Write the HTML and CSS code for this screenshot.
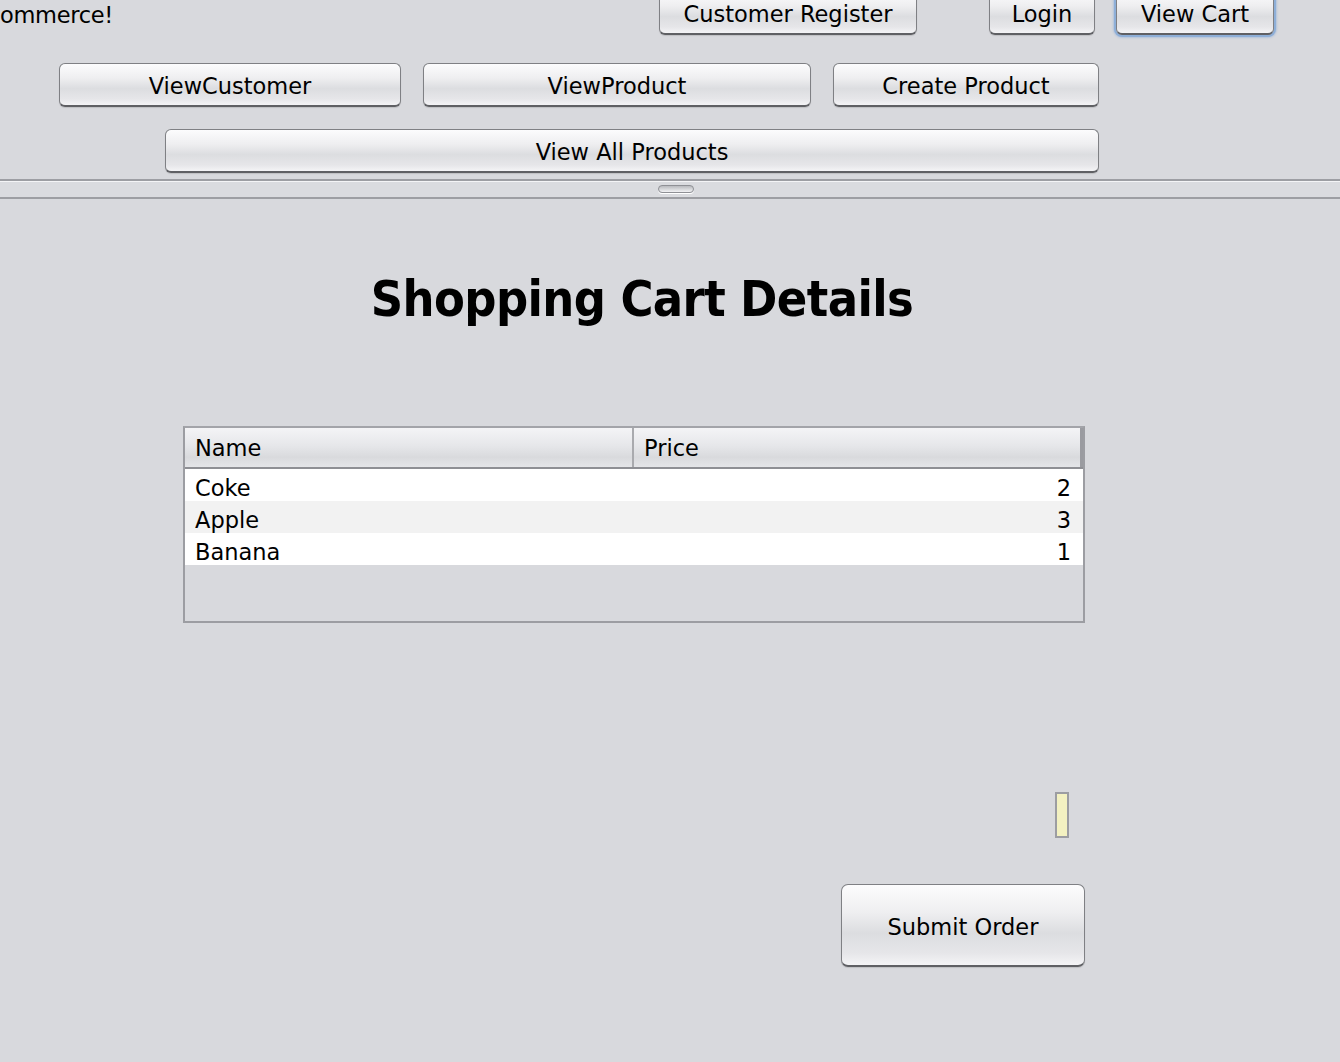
FILE: index.html
```html
<!DOCTYPE html>
<html>
<head>
<meta charset="utf-8">
<title>Shopping Cart</title>
<link rel="stylesheet" href="styles.css">
</head>
<body>
<div class="window">
  <div class="toolbar">
    <div class="row row1">
      <span class="welcome">ommerce!</span>
      <button class="btn w-register">Customer Register</button>
      <button class="btn w-login">Login</button>
      <button class="btn w-cart focused">View Cart</button>
    </div>
    <div class="row row2">
      <button class="btn w-vcust">ViewCustomer</button>
      <button class="btn w-vprod">ViewProduct</button>
      <button class="btn w-cprod">Create Product</button>
    </div>
    <div class="row row3">
      <button class="btn w-all">View All Products</button>
    </div>
  </div>
  <div class="divider"><span class="handle"></span></div>
  <div class="content">
    <h1 class="title">Shopping Cart Details</h1>
    <div class="table">
      <div class="thead">
        <div class="th col-name">Name</div>
        <div class="th col-price">Price</div>
      </div>
      <div class="tr"><div class="td col-name">Coke</div><div class="td col-price num">2</div></div>
      <div class="tr alt"><div class="td col-name">Apple</div><div class="td col-price num">3</div></div>
      <div class="tr"><div class="td col-name">Banana</div><div class="td col-price num">1</div></div>
    </div>
    <div class="field"></div>
    <button class="btn submit">Submit Order</button>
  </div>
</div>
</body>
</html>
```
FILE: styles.css
```css
html, body {
  margin: 0;
  padding: 0;
}
body {
  background: #d8d9dd;
  font-family: "DejaVu Sans", "Lucida Grande", sans-serif;
  font-size: 22.5px;
  color: #000;
  width: 1340px;
  height: 1062px;
  overflow: hidden;
}
.window {
  display: flex;
  flex-direction: column;
}
.toolbar {
  display: flex;
  flex-direction: column;
  margin-top: -9px;
}
.row {
  display: flex;
  align-items: center;
  height: 44px;
}
.row2 {
  margin-top: 28px;
  padding-left: 59px;
  gap: 22px;
}
.row3 {
  margin-top: 22px;
  padding-left: 165px;
}
.welcome {
  flex: 0 0 659px;
  line-height: 44px;
  padding-top: 3px;
  letter-spacing: -0.3px;
}
.btn {
  box-sizing: border-box;
  height: 44px;
  font-family: inherit;
  font-size: 22.5px;
  color: #000;
  border: 1px solid #7f8084;
  border-bottom: 2px solid #5f6064;
  border-radius: 6px;
  background: linear-gradient(to bottom, #fcfcfd 0%, #eeeef0 35%, #dcdde0 60%, #e6e6e9 85%, #f4f4f6 100%);
  box-shadow: 0 1px 1px rgba(0,0,0,0.12);
  padding: 3px 0 0 0;
  text-align: center;
  line-height: 1;
  cursor: default;
}
.w-register { width: 258px; }
.w-login { width: 106px; margin-left: 72px; }
.w-cart { width: 158px; margin-left: 21px; }
.focused {
  box-shadow: 0 0 0 2px #8eafd8, 0 0 2px 3px rgba(120,160,215,0.4);
}
.w-vcust { width: 342px; }
.w-vprod { width: 388px; }
.w-cprod { width: 266px; }
.w-all { width: 934px; }

.divider {
  margin-top: 6px;
  height: 16px;
  border-top: 2px solid #9d9ea3;
  border-bottom: 2px solid #9d9ea3;
  background: #dadbdf;
  box-shadow: inset 0 1px 0 #f4f4f6;
  display: flex;
  justify-content: center;
  padding-left: 12px;
  box-sizing: content-box;
}
.handle {
  display: block;
  width: 34px;
  height: 6px;
  margin-top: 4px;
  border: 1px solid #8f9095;
  border-radius: 4px;
  background: linear-gradient(to bottom, #b9babe, #f2f2f4);
  box-shadow: 0 1px 0 #ffffff;
}

.content {
  display: flex;
  flex-direction: column;
  align-items: flex-start;
}
.title {
  align-self: stretch;
  margin: 70px 0 0 0;
  padding-right: 56px;
  height: 60px;
  line-height: 60px;
  text-align: center;
  font-family: "DejaVu Sans Condensed", "DejaVu Sans", sans-serif;
  font-stretch: condensed;
  font-weight: bold;
  font-size: 50px;
  letter-spacing: -0.6px;
}
.table {
  margin-top: 97px;
  margin-left: 183px;
  width: 902px;
  height: 197px;
  box-sizing: border-box;
  border: 2px solid #9c9da2;
  border-top-color: #a3a4a9;
  background: #d8d9dd;
  display: flex;
  flex-direction: column;
}
.thead {
  display: flex;
  height: 41px;
  box-sizing: border-box;
  border-bottom: 2px solid #8e8f94;
  background: linear-gradient(to bottom, #f4f4f6 0%, #e6e7ea 45%, #d9dadd 75%, #e4e5e8 100%);
}
.th {
  box-sizing: border-box;
  padding-left: 10px;
  line-height: 38px;
  padding-top: 1px;
}
.thead .col-name {
  border-right: 2px solid #a9aaae;
}
.thead .col-price {
  border-right: 3px solid #9a9ba0;
}
.col-name { width: 449px; }
.col-price { flex: 1; }
.tr {
  display: flex;
  height: 32px;
  background: #ffffff;
}
.tr.alt {
  background: #f2f2f2;
}
.td {
  box-sizing: border-box;
  padding-left: 10px;
  line-height: 32px;
  padding-top: 3px;
}
.td.num {
  text-align: right;
  padding-right: 12px;
}
.field {
  margin-top: 169px;
  margin-left: 1055px;
  width: 14px;
  height: 46px;
  box-sizing: border-box;
  border: 2px solid #9c9da2;
  background: #f3f1c1;
}
.submit {
  margin-top: 46px;
  margin-left: 841px;
  width: 244px;
  height: 83px;
  padding-top: 5px;
  border-radius: 7px;
}
```
